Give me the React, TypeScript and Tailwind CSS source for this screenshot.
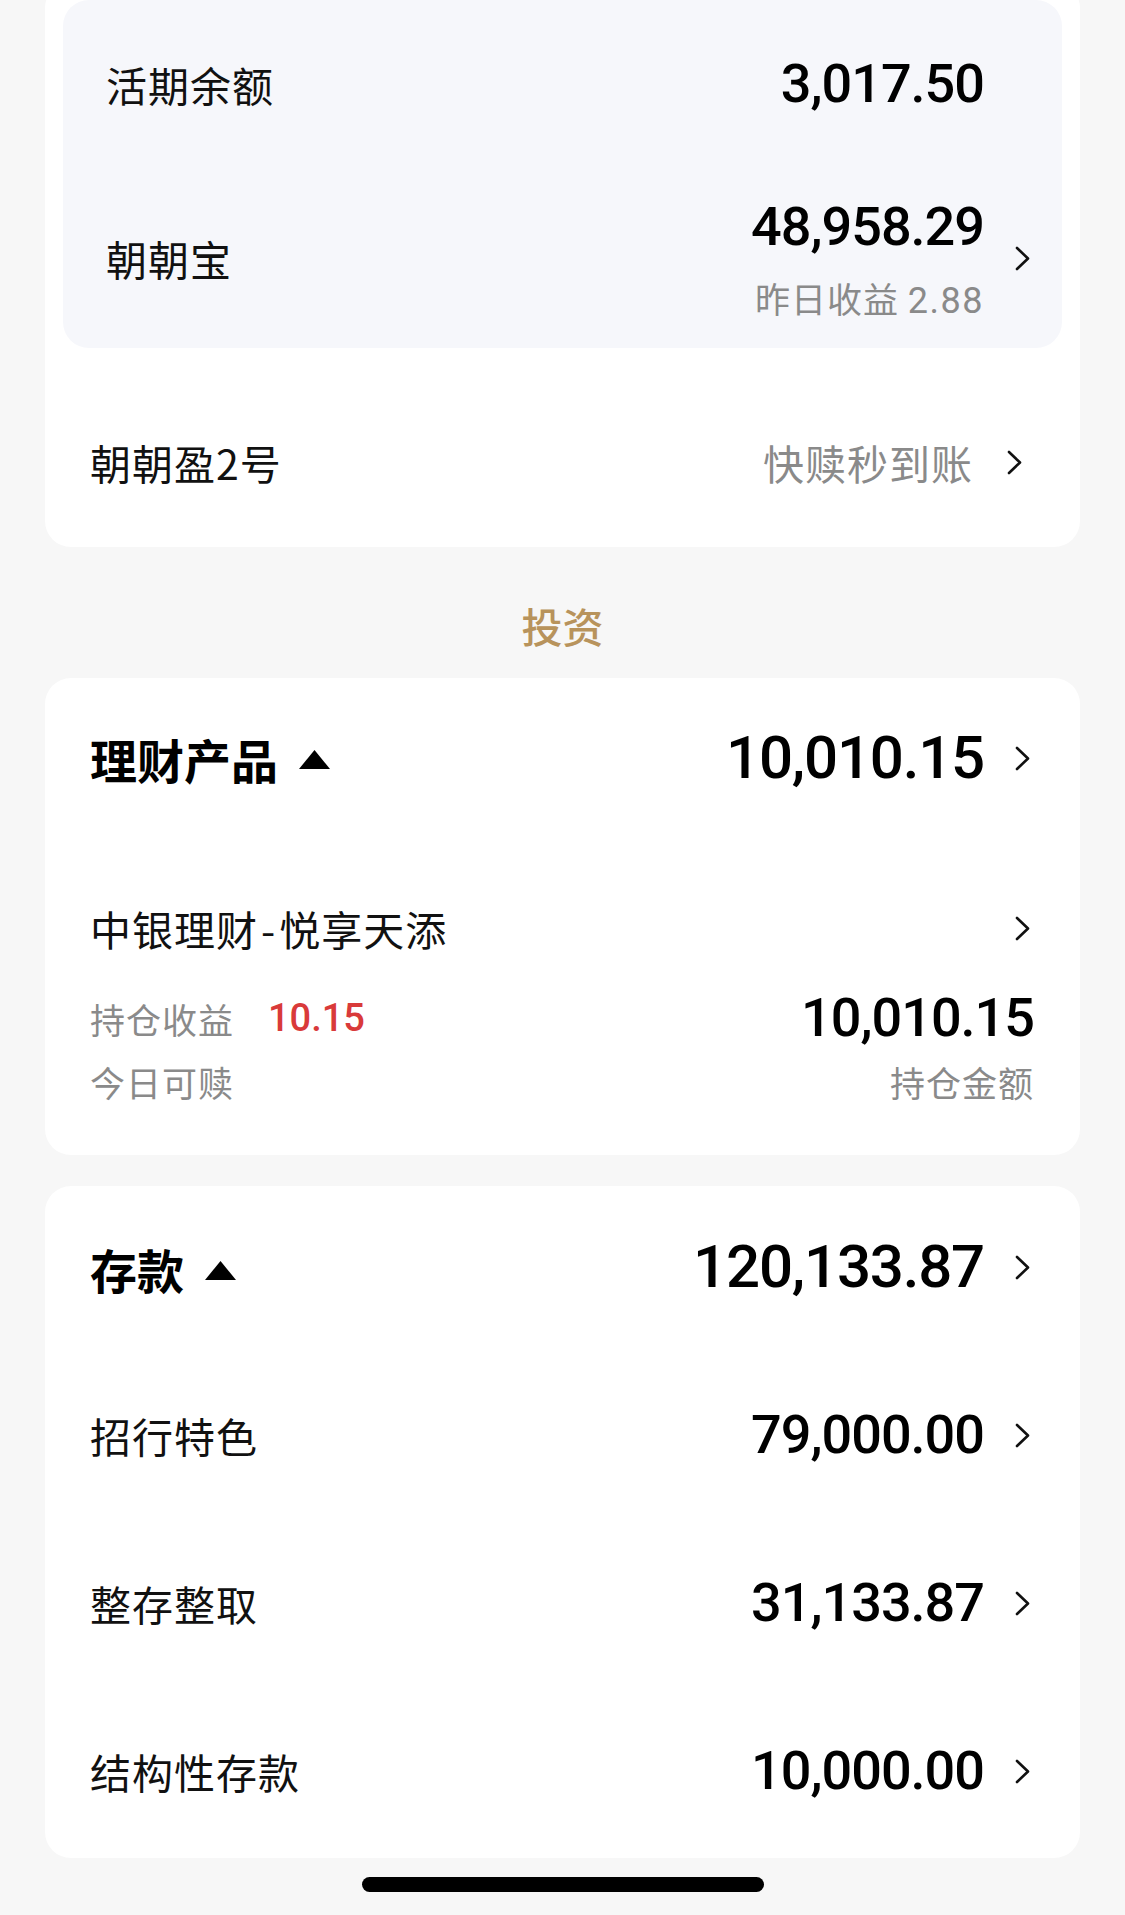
import React from "react";

const Chevron = ({ hidden }: { hidden?: boolean }) => (
  <svg
    width="15"
    height="25"
    viewBox="0 0 15 25"
    className={hidden ? "invisible shrink-0" : "shrink-0"}
  >
    <polyline
      points="2,2 13,12.5 2,23"
      fill="none"
      stroke="#111"
      strokeWidth="2.6"
      strokeLinecap="round"
      strokeLinejoin="round"
    />
  </svg>
);

const Tri = () => (
  <svg width="31" height="19" viewBox="0 0 31 19" className="ml-[21px] mt-[3px] shrink-0">
    <polygon points="15.5,0 31,19 0,19" fill="#000" />
  </svg>
);

const Num = ({ children, className }: { children: React.ReactNode; className: string }) => (
  <span className={"font-['Roboto','Noto_Sans_CJK_SC',sans-serif] font-medium leading-none text-black " + className}>
    {children}
  </span>
);

const DepositRow = ({ label, value }: { label: string; value: string }) => (
  <div className="flex h-[168px] items-center justify-between">
    <span className="text-[41px] leading-none tracking-[1px]">{label}</span>
    <div className="flex items-center gap-[31px]">
      <Num className="text-[54px] tracking-[-1px]">{value}</Num>
      <Chevron />
    </div>
  </div>
);

export default function App() {
  return (
    <div className="h-[1915px] w-[1125px] overflow-hidden bg-[#f7f7f7] px-[45px] font-['Noto_Sans_CJK_SC',sans-serif] text-[#111]">
      {/* Card 1 */}
      <div className="-mt-[18px] rounded-[26px] bg-white px-[18px] pt-[18px] pb-px">
        <div className="rounded-[26px] bg-[#f6f7fb] pl-[43px] pr-[32px]">
          <div className="flex h-[168px] items-center justify-between">
            <span className="text-[41px] leading-none tracking-[1px]">活期余额</span>
            <div className="flex items-center gap-[31px]">
              <Num className="text-[54px] tracking-[-1px]">3,017.50</Num>
              <Chevron hidden />
            </div>
          </div>
          <div className="flex h-[180px] items-center justify-between">
            <span className="text-[41px] leading-none tracking-[1px]">朝朝宝</span>
            <div className="flex items-center gap-[31px]">
              <div className="mt-[4px] flex flex-col items-end">
                <Num className="text-[54px] leading-[60px] tracking-[-1px]">48,958.29</Num>
                <span className="mt-[24px] text-[35px] leading-[40px] tracking-[1px] text-[#8a8a8a]">
                  昨日收益{" "}
                  <span className="font-['Roboto','Noto_Sans_CJK_SC',sans-serif] text-[36px] tracking-[1.5px]">2.88</span>
                </span>
              </div>
              <Chevron />
            </div>
          </div>
        </div>
        <div className="mt-[30px] flex h-[168px] items-center justify-between pl-[27px] pr-[40px]">
          <span className="text-[41px] leading-none tracking-[1px]">朝朝盈2号</span>
          <div className="flex items-center gap-[34px]">
            <span className="text-[41px] leading-none tracking-[1px] text-[#8a8a8a]">快赎秒到账</span>
            <Chevron />
          </div>
        </div>
      </div>

      {/* Section title */}
      <div className="flex h-[131px] items-center justify-center pt-[25px]">
        <span className="text-[41px] font-medium leading-none text-[#b8935c]">投资</span>
      </div>

      {/* Card 2 */}
      <div className="rounded-[26px] bg-white pb-[50px] pl-[45px] pr-[50px]">
        <div className="flex h-[160px] items-center justify-between">
          <div className="flex items-center">
            <span className="text-[47px] font-bold leading-none text-black">理财产品</span>
            <Tri />
          </div>
          <div className="flex items-center gap-[31px]">
            <Num className="text-[60px] tracking-[-1.2px]">10,010.15</Num>
            <Chevron />
          </div>
        </div>
        <div className="mt-[48px] flex h-[84px] items-center justify-between">
          <span className="text-[41px] leading-none tracking-[1px]">
            中银理财<span className="mx-[3px]">-</span>悦享天添
          </span>
          <Chevron />
        </div>
        <div className="mt-[24px] flex h-[48px] items-center justify-between">
          <div className="flex items-center">
            <span className="text-[35px] leading-none tracking-[1px] text-[#8a8a8a]">持仓收益</span>
            <span className="ml-[34px] font-['Roboto','Noto_Sans_CJK_SC',sans-serif] text-[38px] font-medium leading-none text-[#d93a3a]">
              10.15
            </span>
          </div>
          <div className="-mr-[4px]">
            <Num className="text-[54px] tracking-[-1px]">10,010.15</Num>
          </div>
        </div>
        <div className="mt-[15px] flex h-[48px] items-center justify-between">
          <span className="text-[35px] leading-none tracking-[1px] text-[#8a8a8a]">今日可赎</span>
          <span className="-mr-[4px] text-[35px] leading-none tracking-[1px] text-[#8a8a8a]">持仓金额</span>
        </div>
      </div>

      {/* Card 3 */}
      <div className="mt-[31px] rounded-[26px] bg-white pb-[3px] pl-[45px] pr-[50px]">
        <div className="flex h-[165px] items-center justify-between">
          <div className="flex items-center">
            <span className="text-[47px] font-bold leading-none text-black">存款</span>
            <Tri />
          </div>
          <div className="mt-[-3px] flex items-center gap-[31px]">
            <Num className="text-[60px] tracking-[-1.2px]">120,133.87</Num>
            <Chevron />
          </div>
        </div>
        <DepositRow label="招行特色" value="79,000.00" />
        <DepositRow label="整存整取" value="31,133.87" />
        <DepositRow label="结构性存款" value="10,000.00" />
      </div>

      {/* Home indicator */}
      <div className="mx-auto mt-[19px] h-[15px] w-[402px] rounded-full bg-black" />
    </div>
  );
}
